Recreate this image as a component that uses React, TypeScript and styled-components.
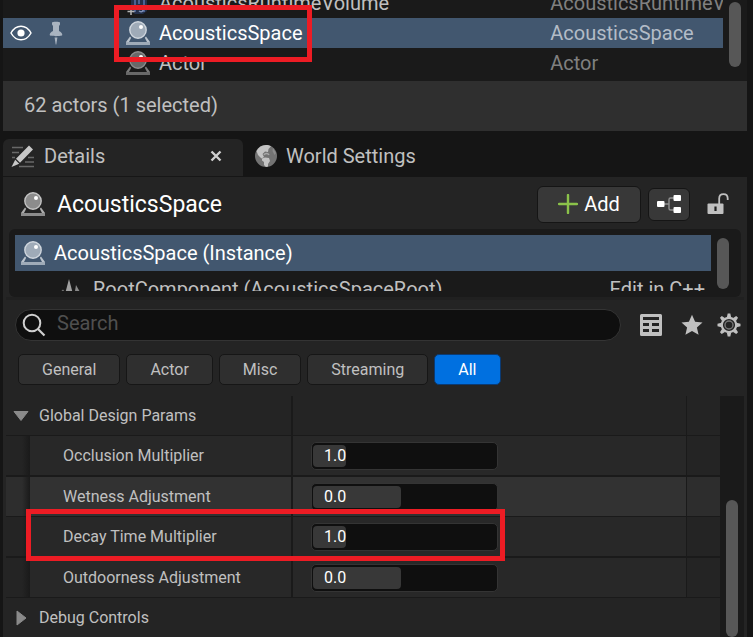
import React from "react";
import styled, { createGlobalStyle, css } from "styled-components";

const color = {
  page: "#151515",
  recess: "#1a1a1a",
  panel: "#242424",
  row: "#282828",
  hover: "#323232",
  input: "#0f0f0f",
  selected: "#42576f",
  text: "#c0c0c0",
  dim: "#808080",
  red: "#ed1c24",
};

const GlobalStyle = createGlobalStyle`
  * { box-sizing: border-box; }
  body {
    margin: 0;
    background: ${color.page};
    color: ${color.text};
    font: 20px/24px Roboto, sans-serif;
    overflow: hidden;
  }
  button, input { font: inherit; color: inherit; }
  svg { display: block; flex: none; }
`;

const Page = styled.main`
  min-height: 100vh;
  padding: 0 6px 0 3px;
  display: flex;
  flex-direction: column;
`;

/* ---------- Outliner ---------- */

const Outliner = styled.section`
  height: 81px;
  display: flex;
  background: ${color.recess};
  overflow: hidden;
`;

const OutlinerList = styled.div`
  flex: 1;
  min-width: 0;
  display: flex;
  flex-direction: column;
  justify-content: flex-end;
  padding-bottom: 3px;
`;

const ActorTable = styled.table`
  width: 100%;
  table-layout: fixed;
  border-collapse: collapse;
`;

const ActorRow = styled.tr<{ $selected?: boolean }>`
  height: 30px;
  background: ${(p) => (p.$selected ? color.selected : "transparent")};
  color: ${(p) => (p.$selected ? "#ffffff" : color.text)};
`;

const ActorCell = styled.td<{ $w?: string }>`
  width: ${(p) => p.$w ?? "auto"};
  padding: 0;
  white-space: nowrap;
`;

const TypeCell = styled(ActorCell)<{ $selected?: boolean }>`
  overflow: hidden;
  color: ${(p) => (p.$selected ? "#b3bcc7" : color.dim)};
`;

const CellInner = styled.div<{ $gap?: number; $pad?: number }>`
  position: relative;
  height: 30px;
  display: flex;
  align-items: center;
  gap: ${(p) => p.$gap ?? 0}px;
  padding-left: ${(p) => p.$pad ?? 0}px;
`;

const Gutter = styled.div<{ $pad: string; $w?: number }>`
  width: ${(p) => p.$w ?? 24}px;
  flex: none;
  padding: ${(p) => p.$pad};
`;

const Thumb = styled.div<{ $h?: number }>`
  width: 12px;
  height: ${(p) => (p.$h ? `${p.$h}px` : "100%")};
  border-radius: 6px;
  background: #575757;
`;

const Status = styled.footer`
  height: 50px;
  display: flex;
  align-items: center;
  padding: 0 21px 2px;
  background: #2f2f2f;
`;

const Highlight = styled.div<{ $x: number; $y: number; $w: number; $h: number }>`
  position: absolute;
  z-index: 2;
  left: ${(p) => p.$x}px;
  top: ${(p) => p.$y}px;
  width: ${(p) => p.$w}px;
  height: ${(p) => p.$h}px;
  border: 5px solid ${color.red};
  pointer-events: none;
`;

/* ---------- Tabs ---------- */

const TabBar = styled.nav`
  display: flex;
  margin-top: 8px;
  height: 38px;
`;

const Tab = styled.div<{ $active?: boolean }>`
  display: flex;
  align-items: center;
  padding: 0 12px 4px;
  border-radius: 6px 6px 0 0;
  ${(p) =>
    p.$active &&
    css`
      width: 240px;
      background: ${color.panel};
      border-bottom: 1px solid #161616;
      padding: 0 21px 3px 8px;
    `}
`;

const TabButton = styled.button`
  flex: 1;
  display: flex;
  align-items: center;
  gap: 9px;
  padding: 0;
  border: 0;
  background: none;
`;

const IconButton = styled.button`
  display: flex;
  padding: 0;
  border: 0;
  background: none;
`;

/* ---------- Details ---------- */

const Details = styled.section`
  flex: 1;
  display: flex;
  flex-direction: column;
  background: ${color.panel};
`;

const Header = styled.header`
  height: 52px;
  display: flex;
  align-items: center;
  padding: 2px 18px 0;
`;

const Title = styled.h1`
  flex: 1;
  margin: 0 0 0 12px;
  padding-top: 2px;
  font-size: 23px;
  line-height: 28px;
  font-weight: 400;
  color: #ffffff;
`;

const HeaderTools = styled.div`
  display: flex;
  align-items: center;
`;

const RaisedButton = styled.button<{ $w: number; $h: number }>`
  width: ${(p) => p.$w}px;
  height: ${(p) => p.$h}px;
  display: flex;
  align-items: center;
  justify-content: center;
  gap: 6px;
  padding: 0;
  border: 1px solid #151515;
  border-radius: 6px;
  background: #383838;
  color: #ffffff;
  margin-right: 7px;

  &:nth-of-type(2) {
    margin-right: 17px;
  }
`;

const Components = styled.div`
  height: 68px;
  margin: 0 6px;
  padding: 6px 0 6px 6px;
  display: flex;
  border-radius: 6px;
  background: ${color.recess};
`;

const ComponentTree = styled.div`
  flex: 1;
  min-width: 0;
  overflow: hidden;
`;

const ComponentRow = styled.div<{ $selected?: boolean }>`
  height: 36px;
  display: flex;
  align-items: center;
  gap: 9px;
  padding: ${(p) => (p.$selected ? "0 6px" : "0 6px 0 45px")};
  background: ${(p) => (p.$selected ? color.selected : "transparent")};
  color: ${(p) => (p.$selected ? "#ffffff" : color.text)};
`;

const Grow = styled.span`
  flex: 1;
`;

const EditLink = styled.a`
  color: inherit;
  text-decoration: none;
`;

const Divider = styled.hr`
  height: 3px;
  margin: 0 3px;
  border: 0;
  background: #202020;
`;

const SearchRow = styled.div`
  display: flex;
  align-items: center;
  gap: 19px;
  padding: 9px 6px 0 12px;
`;

const SearchBox = styled.label`
  flex: 1;
  height: 32px;
  display: flex;
  align-items: center;
  gap: 11px;
  padding: 0 16px 0 6px;
  border: 1px solid #343434;
  border-radius: 16px;
  background: ${color.input};
`;

const SearchInput = styled.input`
  flex: 1;
  min-width: 0;
  padding: 0 0 4px;
  border: 0;
  outline: 0;
  background: none;
  &::placeholder {
    color: #4f4f4f;
    opacity: 1;
  }
`;

const Tools = styled.div`
  display: grid;
  grid-template-columns: 41px 36px 24px;
  align-items: center;
`;

const Filters = styled.div`
  display: flex;
  gap: 6px;
  padding: 13px 15px 11px;
`;

const Chip = styled.button<{ $active?: boolean }>`
  height: 31px;
  padding: 0 23px;
  border: 1px solid ${(p) => (p.$active ? "#0b3a72" : "#161616")};
  border-radius: 5px;
  background: ${(p) => (p.$active ? "#0070e0" : "#2f2f2f")};
  color: ${(p) => (p.$active ? "#ffffff" : color.text)};
  font-size: 16px;
  line-height: 20px;
`;

const Properties = styled.div`
  flex: 1;
  display: flex;
  margin: 0 3px;
  font-size: 16px;
  line-height: 20px;
`;

const PropertyList = styled.div`
  flex: 1;
  min-width: 0;
`;

const PropertyGutter = styled(Gutter)`
  display: flex;
  background: ${color.recess};
  overflow: hidden;
`;

const columns = css`
  display: grid;
  grid-template-columns: minmax(0, 287fr) minmax(0, 394fr) 33px;
`;

const Category = styled.div<{ $columns?: boolean }>`
  ${(p) =>
    p.$columns &&
    css`
      ${columns}
      border-bottom: 1px solid ${color.recess};
    `}
`;

const CategoryCell = styled.div`
  border-right: 2px solid ${color.recess};
  & + & {
    border-right-width: 1px;
  }
`;

const CategoryButton = styled.button`
  height: 39px;
  display: flex;
  align-items: center;
  gap: 9px;
  padding: 0 6px;
  border: 0;
  background: none;
`;

const PropertyRow = styled.div<{ $line: number; $hover?: boolean }>`
  ${columns}
  position: relative;
  background: ${(p) => (p.$hover ? "#2d2d2d" : color.panel)};
  border-bottom: ${(p) => p.$line}px solid ${color.recess};
  --cell: ${(p) => (p.$hover ? color.hover : color.row)};
`;

const NameCell = styled.label`
  height: 39px;
  display: flex;
  align-items: center;
  border-right: 2px solid ${color.recess};
  white-space: nowrap;
  background: linear-gradient(to right, transparent 24px, var(--cell) 24px);
  &::before {
    content: "";
    align-self: stretch;
    width: 24px;
    margin-right: 33px;
    background: linear-gradient(to right, transparent 16px, ${color.recess});
  }
`;

const ValueCell = styled.div`
  display: flex;
  align-items: center;
  padding-left: 18px;
  background: var(--cell);
  border-right: 1px solid ${color.recess};
`;

const Field = styled.div`
  width: 187px;
  height: 28px;
  display: grid;
  padding: 2px 1px;
  border: 1px solid #343434;
  border-radius: 5px;
  background: ${color.input};
  & > * {
    grid-area: 1 / 1;
  }
`;

const Fill = styled.div`
  border-radius: 4px;
  background: #383838;
`;

const FieldInput = styled.input`
  z-index: 1;
  min-width: 0;
  width: 100%;
  padding: 0 11px;
  border: 0;
  outline: 0;
  background: none;
  color: #ffffff;
`;

/* ---------- Icons ---------- */

const ActorIcon = ({ ball = "#8c8c8c", light = "#c4c4c4" }) => (
  <svg width="24" height="24" viewBox="0 0 24 24">
    <path d="M4 15.500 0 21v3h24v-3l-4-5.500-1.200 1.200L21 21H3l2.200-4.300Z" fill={light} opacity=".85" />
    <path d="M0 21h24v3H0Z" fill={ball} />
    <circle cx="12" cy="9" r="8.200" fill={ball} stroke={light} strokeWidth="1.400" />
    <circle cx="15" cy="6" r="2" fill="#fff" />
  </svg>
);

const VolumeIcon = () => (
  <svg width="24" height="24" viewBox="0 0 24 24">
    <path d="M5 3h16v17l-4 3H9l-4-3Z" fill="#24304a" />
    <path d="M9 4v17M13 4v9M18 4v17" stroke="#4a6193" strokeWidth="2" />
    <path d="M13 20c3 2 5 0 4-4" fill="none" stroke="#7e8fb5" strokeWidth="1.500" />
    <path d="M5 17v7M1.500 20.500h7" stroke="#b5b5b5" strokeWidth="1.500" />
  </svg>
);

const EyeIcon = () => (
  <svg width="22" height="16" viewBox="0 0 22 16" fill="none">
    <path d="M1 8C3.500 3.500 7 1.200 11 1.200S18.500 3.500 21 8c-2.500 4.500-6 6.800-10 6.800S3.500 12.500 1 8Z" stroke="#fff" strokeWidth="1.500" />
    <circle cx="11" cy="8" r="3.600" fill="#fff" />
  </svg>
);

const PinIcon = () => (
  <svg width="14" height="24" viewBox="0 0 14 24" fill="#a9b4c0">
    <path d="M3 1.500C3 .5 11 .5 11 1.500v2L10 5v5c2 1 3.300 2.300 3.300 4 0 1.500-12.600 1.500-12.600 0C.7 12.300 2 11 4 10V5L3 3.500ZM5.600 16.500h2.800L7.300 23.500h-.6Z" />
  </svg>
);

const PencilIcon = () => (
  <svg width="24" height="24" viewBox="0 0 24 24">
    <path d="M1 3.500h11M1 8.500h7M1 13.500h3M17 13.500h6M14 18h9M8 22.500h15" stroke="#686868" strokeWidth="1.400" />
    <path d="m18 1.500 4 4L9 18.800l-4-4ZM4.200 15.800l4 4L.5 23Z" fill="#c8c8c8" />
  </svg>
);

const GlobeIcon = () => (
  <svg width="22" height="22" viewBox="0 0 22 22">
    <circle cx="11" cy="11" r="11" fill="#737373" />
    <path d="M1.500 6C3.500 2 7 0 11 0c2 0 3.500.4 5 1.300L13.500 4l-.5 3-3-.5-2.500 2.500 1.500 3-2.500 1.500L3 10Z" fill="#c4c4c4" />
    <path d="M9 10c1-2 4-2 5 0" fill="none" stroke="#a8a8a8" strokeWidth="1.500" />
    <path d="m7 13.500 3-1 4 .5 1 3-2 3v2.500l-2 .5-2-2v-3l-2-1.500Z" fill="#c4c4c4" />
    <path d="m18 3 3 5-1.500 2-2-4Z" fill="#8c8c8c" />
  </svg>
);

const CloseIcon = () => (
  <svg width="12" height="12" viewBox="0 0 12 12">
    <path d="m1.500 1.500 9 9m0-9-9 9" stroke="#d0d0d0" strokeWidth="2.400" />
  </svg>
);

const PlusIcon = () => (
  <svg width="20" height="20" viewBox="0 0 20 20">
    <path d="M10 1v18M1 10h18" stroke="#8bc24a" strokeWidth="2.400" strokeLinecap="round" />
  </svg>
);

const GraphIcon = () => (
  <svg width="24" height="20" viewBox="0 0 24 20">
    <path d="M7 10h5M18 4h-4.500Q12 4 12 5.500v9q0 1.500 1.500 1.500H18" fill="none" stroke="#8f8f8f" strokeWidth="1.400" />
    <g fill="#fff">
      <rect x="0" y="7" width="7.500" height="6" rx="1" />
      <rect x="16.500" y="1" width="7.500" height="6" rx="1" />
      <rect x="16.500" y="13" width="7.500" height="6" rx="1" />
    </g>
  </svg>
);

const LockIcon = () => (
  <svg width="22" height="22" viewBox="0 0 22 22">
    <path d="M12.200 11V5.500C12.200 3 14 1.200 16.500 1.200S20.700 3 20.700 5.500V7" fill="none" stroke="#c0c0c0" strokeWidth="1.800" />
    <path d="M1.500 10.500h14q1 0 1 1V20q0 1-1 1h-14q-1 0-1-1v-8.500q0-1 1-1Z" fill="#c0c0c0" />
    <path d="M8.500 13.500v4.500" stroke="#1d1d1d" strokeWidth="2.200" />
  </svg>
);

const SceneIcon = () => (
  <svg width="24" height="24" viewBox="0 0 24 24">
    <path d="M9 2 13 17H5Z" fill="#a0a0a0" />
    <path d="m16 8 4 7-5-1Z" fill="#8a8a8a" />
    <path d="m3.500 13-2 2M14 15.500h10" fill="none" stroke="#777" strokeWidth="1.500" />
  </svg>
);

const SearchIcon = () => (
  <svg width="24" height="24" viewBox="0 0 24 24" fill="none" stroke="#d0d0d0">
    <circle cx="10" cy="10" r="8.300" strokeWidth="2" />
    <path d="m16 16 6.500 6.500" strokeWidth="2.200" />
  </svg>
);

const GridIcon = () => (
  <svg width="22" height="22" viewBox="0 0 22 22">
    <path
      fillRule="evenodd"
      fill="#c0c0c0"
      d="M1.500 0h19q1.500 0 1.500 1.500v19q0 1.500-1.500 1.500h-19Q0 22 0 20.500v-19Q0 0 1.500 0ZM3 3v3h16V3ZM3 9v3h6V9Zm9 0v3h7V9ZM3 15v3h6v-3Zm9 0v3h7v-3Z"
    />
  </svg>
);

const StarIcon = () => (
  <svg width="22" height="22" viewBox="0 0 22 22">
    <path d="m11 .8 3.100 7 7.400.7-5.600 5 1.700 7.300L11 17l-6.600 3.800L6.100 13.500l-5.600-5 7.400-.7Z" fill="#c0c0c0" />
  </svg>
);

const GearIcon = () => (
  <svg width="24" height="24" viewBox="-12 -12 24 24">
    <circle r="7.200" fill="none" stroke="#c0c0c0" strokeWidth="2.200" />
    <g fill="#c0c0c0">
      {[0, 45, 90, 135, 180, 225, 270, 315].map((a) => (
        <path key={a} d="M-2.200-7.500-1.300-11.500h2.600l.9 4Z" transform={`rotate(${a})`} />
      ))}
    </g>
    <circle r="4" fill="none" stroke="#777" strokeWidth="1.400" />
  </svg>
);

const Arrow = ({ open }: { open?: boolean }) => (
  <svg width="18" height="18" viewBox="0 0 18 18">
    <path d={open ? "M2 4.500h14L9 13.500Z" : "M5 2v14l9-7Z"} fill="#8a8a8a" stroke="#8a8a8a" strokeLinejoin="round" />
  </svg>
);

/* ---------- Data ---------- */

const filters = ["General", "Actor", "Misc", "Streaming", "All"];

const properties = [
  { id: "occlusion", name: "Occlusion Multiplier", value: "1.0", fill: 18, line: 2 },
  { id: "wetness", name: "Wetness Adjustment", value: "0.0", fill: 48, line: 1, hover: true },
  { id: "decay", name: "Decay Time Multiplier", value: "1.0", fill: 18, line: 2, marked: true },
  { id: "outdoorness", name: "Outdoorness Adjustment", value: "0.0", fill: 48, line: 1 },
];

const actors = [
  { name: "AcousticsRuntimeVolume", icon: <VolumeIcon /> },
  { name: "AcousticsSpace", icon: <ActorIcon ball="#9fabb8" light="#cfd6dd" />, selected: true },
  { name: "Actor", icon: <ActorIcon ball="#686868" light="#8c8c8c" /> },
];

export default function App() {
  return (
    <>
      <GlobalStyle />
      <Page>
        <Outliner aria-label="Outliner">
          <OutlinerList>
            <ActorTable>
              <tbody>
                {actors.map((a) => (
                  <ActorRow key={a.name} $selected={a.selected}>
                    <ActorCell $w="42px">
                      <CellInner $pad={7}>{a.selected && <EyeIcon />}</CellInner>
                    </ActorCell>
                    <ActorCell $w="81px">
                      <CellInner $pad={4}>{a.selected && <PinIcon />}</CellInner>
                    </ActorCell>
                    <ActorCell>
                      <CellInner $gap={9}>
                        {a.icon}
                        {a.name}
                        {a.selected && <Highlight $x={-12} $y={-13} $w={198} $h={57} />}
                      </CellInner>
                    </ActorCell>
                    <TypeCell $w="24%" $selected={a.selected}>
                      {a.name}
                    </TypeCell>
                  </ActorRow>
                ))}
              </tbody>
            </ActorTable>
          </OutlinerList>
          <Gutter $pad="2px 6px">
            <Thumb $h={65} />
          </Gutter>
        </Outliner>
        <Status>62 actors (1 selected)</Status>

        <TabBar>
          <Tab $active>
            <TabButton>
              <PencilIcon />
              Details
            </TabButton>
            <IconButton aria-label="Close Details">
              <CloseIcon />
            </IconButton>
          </Tab>
          <Tab>
            <TabButton>
              <GlobeIcon />
              World Settings
            </TabButton>
          </Tab>
        </TabBar>

        <Details>
          <Header>
            <ActorIcon />
            <Title>AcousticsSpace</Title>
            <HeaderTools>
              <RaisedButton $w={104} $h={37}>
                <PlusIcon />
                Add
              </RaisedButton>
              <RaisedButton $w={42} $h={33} aria-label="Edit blueprint">
                <GraphIcon />
              </RaisedButton>
              <IconButton aria-label="Unlock">
                <LockIcon />
              </IconButton>
            </HeaderTools>
          </Header>

          <Components>
            <ComponentTree>
              <ComponentRow $selected>
                <ActorIcon ball="#9fabb8" light="#cfd6dd" />
                AcousticsSpace (Instance)
              </ComponentRow>
              <ComponentRow>
                <SceneIcon />
                <Grow>RootComponent (AcousticsSpaceRoot)</Grow>
                <EditLink href="#">Edit in C++</EditLink>
              </ComponentRow>
            </ComponentTree>
            <Gutter $w={30} $pad="3px 12px 2px 6px">
              <Thumb />
            </Gutter>
          </Components>
          <Divider />

          <SearchRow>
            <SearchBox>
              <SearchIcon />
              <SearchInput type="text" placeholder="Search" aria-label="Search" />
            </SearchBox>
            <Tools>
              <IconButton aria-label="Property matrix">
                <GridIcon />
              </IconButton>
              <IconButton aria-label="Favorites">
                <StarIcon />
              </IconButton>
              <IconButton aria-label="Settings">
                <GearIcon />
              </IconButton>
            </Tools>
          </SearchRow>

          <Filters>
            {filters.map((f) => (
              <Chip key={f} $active={f === "All"}>
                {f}
              </Chip>
            ))}
          </Filters>

          <Properties>
            <PropertyList>
              <Category $columns>
                <CategoryCell>
                  <CategoryButton aria-expanded="true">
                    <Arrow open />
                    Global Design Params
                  </CategoryButton>
                </CategoryCell>
                <CategoryCell />
              </Category>
              {properties.map((p) => (
                <PropertyRow key={p.id} $line={p.line} $hover={p.hover}>
                  <NameCell htmlFor={p.id}>{p.name}</NameCell>
                  <ValueCell>
                    <Field>
                      <Fill style={{ width: `${p.fill}%` }} />
                      <FieldInput id={p.id} type="text" defaultValue={p.value} />
                    </Field>
                  </ValueCell>
                  {p.marked && <Highlight $x={20} $y={-8} $w={479} $h={52} />}
                </PropertyRow>
              ))}
              <Category>
                <CategoryButton aria-expanded="false">
                  <Arrow />
                  Debug Controls
                </CategoryButton>
              </Category>
            </PropertyList>
            <PropertyGutter $pad="104px 6px 0">
              <Thumb $h={137} />
            </PropertyGutter>
          </Properties>
        </Details>
      </Page>
    </>
  );
}
